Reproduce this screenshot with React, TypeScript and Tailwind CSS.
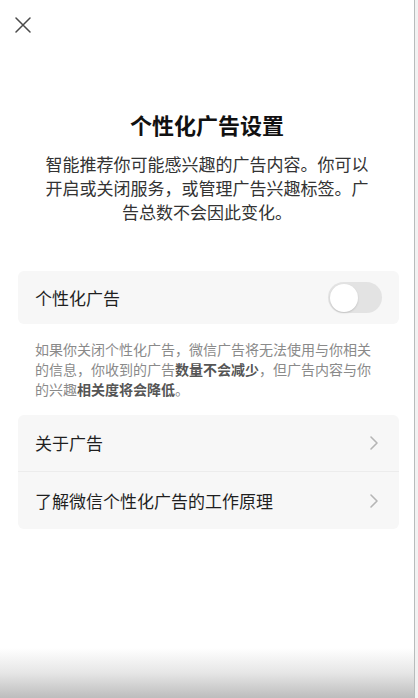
import React from 'react';

const font = { fontFamily: '"Noto Sans CJK SC", "Noto Sans", sans-serif' };

const Chevron = () => (
    <svg width="10" height="16" viewBox="0 0 10 16" fill="none">
        <path d="M2 2l6 6-6 6" stroke="#b5b5b5" strokeWidth="1.6" strokeLinecap="round" strokeLinejoin="round" />
    </svg>
);

const Row = ({ label, last }: { label: string; last?: boolean }) => (
    <div className={`flex items-center justify-between h-[57px] pl-[17px] pr-[20px] ${last ? '' : 'border-b border-[#ececec]'}`}>
        <span className="text-[17px] text-[#1f1f1f]">{label}</span>
        <Chevron />
    </div>
);

export default function App() {
    return (
        <div className="flex h-[698px] w-[418px] bg-white overflow-hidden" style={font}>
            <div className="relative flex flex-col w-[415px] h-full border-r border-[#b8bcbc]">
                <div className="pt-[17px] pl-[15px] h-[92px]">
                    <svg width="16" height="16" viewBox="0 0 16 16" fill="none">
                        <path d="M1 1l14 14M15 1L1 15" stroke="#4a4a4a" strokeWidth="1.5" strokeLinecap="round" />
                    </svg>
                </div>
                <h1 className="text-center text-[22px] font-bold text-[#111] leading-[30px] mt-[17px]">个性化广告设置</h1>
                <p className="mx-auto mt-[13px] w-[336px] text-center text-[17px] leading-[24px] text-[#333]">
                    智能推荐你可能感兴趣的广告内容。你可以开启或关闭服务，或管理广告兴趣标签。广告总数不会因此变化。
                </p>

                <div className="ml-[18px] mr-[15px] mt-[47px] flex h-[53px] items-center justify-between rounded-[6px] bg-[#f7f7f7] pl-[17px] pr-[17px]">
                    <span className="text-[17px] text-[#1f1f1f]">个性化广告</span>
                    <div className="flex h-[31px] w-[54px] items-center rounded-full bg-[#e3e3e3] px-[2px]">
                        <div className="h-[28px] w-[28px] rounded-full bg-white shadow-[0_1px_2px_rgba(0,0,0,0.15)]" />
                    </div>
                </div>
                <p className="mx-[35px] mt-[15px] text-[14px] leading-[20px] text-[#8a8a8a]">
                    <span>如果你关闭个性化广告，微信广告将无法使用与你相关</span>
                    <span>的信息，你收到的广告</span>
                    <span className="font-bold text-[#555]">数量不会减少</span>
                    <span>，但广告内容与你</span>
                    <span>的兴趣</span>
                    <span className="font-bold text-[#555]">相关度将会降低</span>
                    <span>。</span>
                </p>

                <div className="ml-[18px] mr-[15px] mt-[16px] rounded-[6px] bg-[#f7f7f7]">
                    <Row label="关于广告" />
                    <Row label="了解微信个性化广告的工作原理" last />
                </div>

                <div className="mt-auto h-[50px] bg-gradient-to-b from-white via-[#e6e6e6] to-[#bdbdbd]" />
            </div>
            <div className="flex-1 bg-[#f2f2f2]" />
        </div>
    );
}
